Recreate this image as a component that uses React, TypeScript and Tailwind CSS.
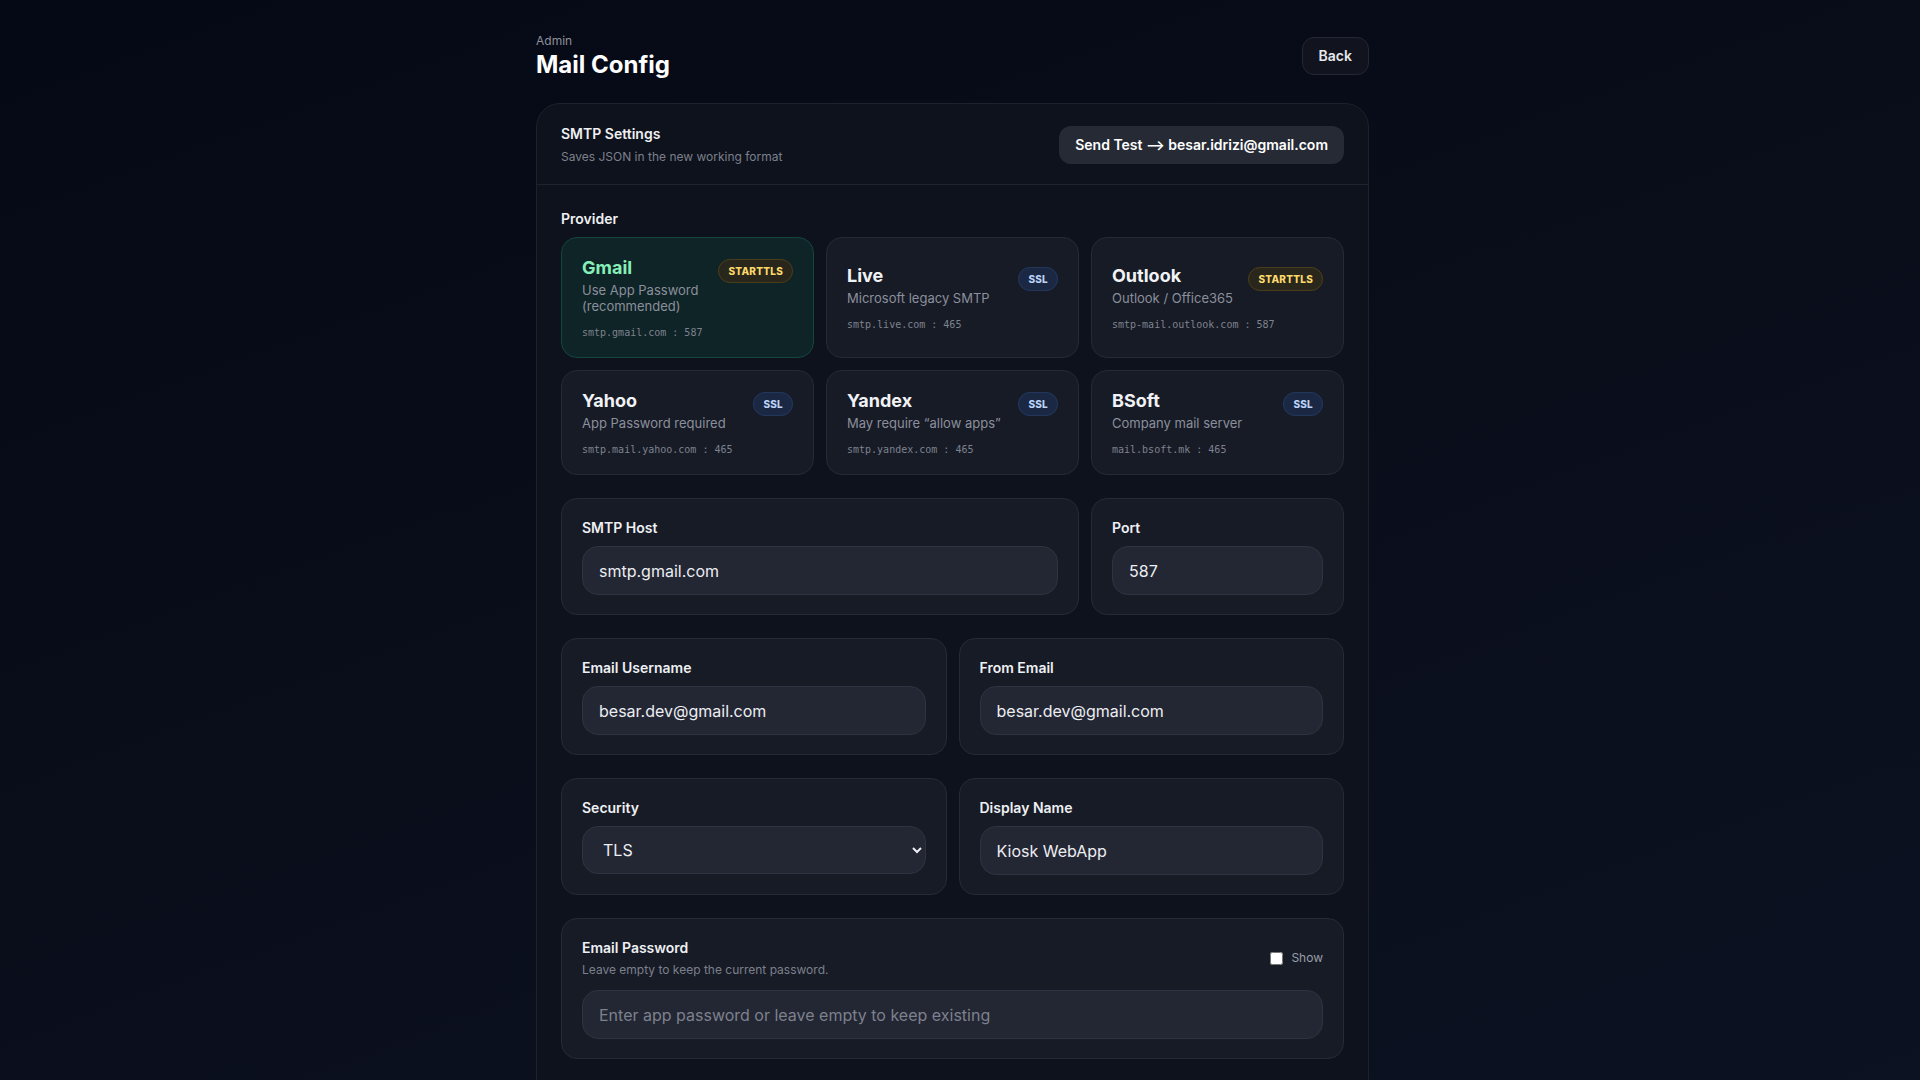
import { useState } from "react";

type Provider = {
	id: string;
	name: string;
	note: string;
	host: string;
	port: number;
	security: "STARTTLS" | "SSL";
};

const providers: Provider[] = [
	{ id: "gmail", name: "Gmail", note: "Use App Password (recommended)", host: "smtp.gmail.com", port: 587, security: "STARTTLS" },
	{ id: "live", name: "Live", note: "Microsoft legacy SMTP", host: "smtp.live.com", port: 465, security: "SSL" },
	{ id: "outlook", name: "Outlook", note: "Outlook / Office365", host: "smtp-mail.outlook.com", port: 587, security: "STARTTLS" },
	{ id: "yahoo", name: "Yahoo", note: "App Password required", host: "smtp.mail.yahoo.com", port: 465, security: "SSL" },
	{ id: "yandex", name: "Yandex", note: "May require \u201Callow apps\u201D", host: "smtp.yandex.com", port: 465, security: "SSL" },
	{ id: "bsoft", name: "BSoft", note: "Company mail server", host: "mail.bsoft.mk", port: 465, security: "SSL" },
];

function SecurityBadge({ kind }: { kind: Provider["security"] }) {
	if (kind === "STARTTLS") {
		return (
			<span className="shrink-0 rounded-full border border-[#4a3d1c] bg-[#29261c] px-[9px] py-[5px] text-[10px] font-extrabold leading-3 tracking-wide text-[#fcd96b]">
				STARTTLS
			</span>
		);
	}
	return (
		<span className="shrink-0 rounded-full border border-[#23365c] bg-[#1a2844] px-[9px] py-[5px] text-[10px] font-extrabold leading-3 tracking-wide text-[#bcd2f7]">
			SSL
		</span>
	);
}

function ProviderCard({ p, active, onPick }: { p: Provider; active: boolean; onPick: () => void }) {
	return (
		<button
			type="button"
			onClick={onPick}
			className={
				active
					? "flex flex-col justify-center rounded-2xl border border-[#14463f] bg-[#0f2427] px-5 py-4 text-left"
					: "flex flex-col justify-center rounded-2xl border border-[#262a37] bg-[#171b26] px-5 py-4 text-left"
			}
		>
			<div className="flex items-start justify-between gap-3">
				<div className="min-w-0">
					<div className={active ? "text-lg font-bold leading-7 text-[#86efb8]" : "text-lg font-bold leading-7 text-[#f1f2f5]"}>
						{p.name}
					</div>
					<div className="text-[13px] leading-4 text-[#8b8f9c]">{p.note}</div>
				</div>
				<div className="pt-[3px]">
					<SecurityBadge kind={p.security} />
				</div>
			</div>
			<div className="mt-[11px] font-['DejaVu_Sans_Mono',monospace] text-[10px] leading-4 text-[#7e828e]">
				{p.host} : {p.port}
			</div>
		</button>
	);
}

function FieldBox({ children, className = "" }: { children: React.ReactNode; className?: string }) {
	return <div className={"rounded-2xl border border-[#262a37] bg-[#171b26] px-5 py-[19px] " + className}>{children}</div>;
}

const labelCls = "block text-sm font-semibold leading-5 text-[#eef0f3]";
const inputCls =
	"mt-2 h-[49px] w-full rounded-2xl border border-[#2f3341] bg-[#232633] px-4 text-base text-[#eceef2] outline-none placeholder:text-[#7d818d]";

export default function App() {
	const [selected, setSelected] = useState("gmail");
	const [showPass, setShowPass] = useState(false);
	const current = providers.find((p) => p.id === selected) ?? providers[0];

	return (
		<div className="min-h-screen bg-[linear-gradient(160deg,#050815_0%,#0a0e1b_45%,#0d1324_100%)] pr-[15px] font-['Inter','Noto_Sans',sans-serif] text-white">
			<div className="mx-auto w-[833px] pt-[33px] pb-8">
				{/* page header */}
				<div className="flex items-start justify-between">
					<div>
						<div className="text-xs leading-4 text-[#8d919c]">Admin</div>
						<h1 className="text-2xl font-bold leading-8 text-white">Mail Config</h1>
					</div>
					<button className="mt-[4px] h-[38px] rounded-xl border border-[#242834] bg-[#11141e] px-4 text-sm font-semibold text-[#e6e8ec]">
						Back
					</button>
				</div>

				<div className="mt-[22px] rounded-3xl border border-[#1d212c] bg-[#0e121c]">
					{/* card header */}
					<div className="flex items-center justify-between border-b border-[#1f2330] px-6 pt-[20px] pb-[19px]">
						<div>
							<div className="text-sm font-semibold leading-5 text-[#eef0f3]">SMTP Settings</div>
							<div className="mt-[5px] text-xs leading-4 text-[#7c808c]">Saves JSON in the new working format</div>
						</div>
						<button className="h-[38px] rounded-xl bg-[#262a35] px-4 text-sm font-semibold text-white">
							Send Test ⟶ besar.idrizi@gmail.com
						</button>
					</div>

					<div className="flex flex-col gap-[23px] px-6 pt-6 pb-6">
						{/* provider presets */}
						<div>
							<div className={labelCls}>Provider</div>
							<div className="mt-2 grid grid-cols-3 gap-3">
								{providers.map((p) => (
									<ProviderCard key={p.id} p={p} active={p.id === selected} onPick={() => setSelected(p.id)} />
								))}
							</div>
						</div>

						<div className="grid grid-cols-3 gap-3">
							<FieldBox className="col-span-2">
								<label className={labelCls}>SMTP Host</label>
								<input className={inputCls} value={current.host} readOnly />
							</FieldBox>
							<FieldBox>
								<label className={labelCls}>Port</label>
								<input className={inputCls} value={current.port} readOnly />
							</FieldBox>
						</div>

						<div className="grid grid-cols-2 gap-3">
							<FieldBox>
								<label className={labelCls}>Email Username</label>
								<input className={inputCls} defaultValue="besar.dev@gmail.com" />
							</FieldBox>
							<FieldBox>
								<label className={labelCls}>From Email</label>
								<input className={inputCls} defaultValue="besar.dev@gmail.com" />
							</FieldBox>
						</div>

						<div className="grid grid-cols-2 gap-3">
							<FieldBox>
								<label className={labelCls}>Security</label>
								<select
									className="mt-2 h-[48px] w-full rounded-2xl border border-[#2f3341] bg-[#232633] px-4 text-base text-[#eceef2] outline-none"
									defaultValue={current.security === "SSL" ? "SSL" : "TLS"}
								>
									<option value="TLS">TLS</option>
									<option value="SSL">SSL</option>
									<option value="NONE">None</option>
								</select>
							</FieldBox>
							<FieldBox>
								<label className={labelCls}>Display Name</label>
								<input className={inputCls} defaultValue="Kiosk WebApp" />
							</FieldBox>
						</div>

						<FieldBox>
							<div className="flex items-center justify-between">
								<div>
									<label className={labelCls}>Email Password</label>
									<div className="mt-[4px] text-xs leading-4 text-[#7c808c]">Leave empty to keep the current password.</div>
								</div>
								<label className="flex items-center gap-2 text-xs text-[#9a9eaa]">
									<input
										type="checkbox"
										className="h-[13px] w-[13px]"
										checked={showPass}
										onChange={(e) => setShowPass(e.target.checked)}
									/>
									Show
								</label>
							</div>
							<input
								type={showPass ? "text" : "password"}
								className={inputCls.replace("mt-2", "mt-3")}
								placeholder="Enter app password or leave empty to keep existing"
							/>
						</FieldBox>

						<FieldBox>
							<label className={labelCls}>Last Test</label>
							<div className="mt-2 h-[56px] rounded-2xl border border-[#2f3341] bg-[#232633] px-4 py-3 font-['DejaVu_Sans_Mono',monospace] text-xs text-[#7e828e]">
								No test sent yet.
							</div>
						</FieldBox>
					</div>

					{/* footer actions */}
					<div className="flex items-center justify-end gap-3 border-t border-[#1f2330] px-6 py-5">
						<button className="h-[42px] rounded-xl border border-[#242834] bg-[#11141e] px-5 text-sm font-semibold text-[#e6e8ec]">
							Reset
						</button>
						<button className="h-[42px] rounded-xl bg-[#10b981] px-5 text-sm font-semibold text-[#04130d]">
							Save Settings
						</button>
					</div>
				</div>
			</div>
		</div>
	);
}
